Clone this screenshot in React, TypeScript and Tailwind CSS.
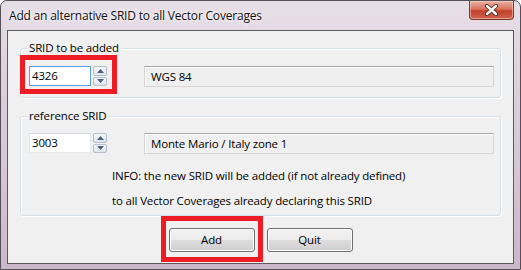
import React from "react";

const T = "text-[11.5px] tracking-[-0.15px]";

function Spin() {
  return (
    <div className="ml-[2px] flex h-[20px] w-[14px] flex-col gap-[1px]">
      {[0, 1].map((i) => (
        <div
          key={i}
          className="flex flex-1 items-center justify-center rounded-[2px] border border-[#b5bfcc] bg-gradient-to-b from-[#f6f7f9] to-[#dfe3e8]"
        >
          <svg width="7" height="4" viewBox="0 0 7 4">
            {i === 0 ? (
              <path d="M0 4 L3.5 0 L7 4 Z" fill="#4d5f80" />
            ) : (
              <path d="M0 0 L3.5 4 L7 0 Z" fill="#4d5f80" />
            )}
          </svg>
        </div>
      ))}
    </div>
  );
}

function Row({ value, name, focused }: { value: string; name: string; focused?: boolean }) {
  return (
    <div className="flex items-start">
      <div
        className={
          "flex h-[20px] w-[62px] items-center bg-white pl-[2px] text-black " +
          T +
          " " +
          (focused
            ? "border border-[#5b9ee0]"
            : "border border-[#e3e9ef] border-t-[#cfd5dc]")
        }
      >
        {value}
      </div>
      <Spin />
      <div
        className={
          "ml-[37px] flex h-[21px] w-[350px] items-center border border-[#d6d6d6] border-t-[#a7a7a7] bg-[#efefef] pl-[6px] text-black shadow-[inset_1px_1px_0_#ffffff] " +
          T
        }
      >
        {name}
      </div>
    </div>
  );
}

function Group({ label, children, h }: { label: string; children: React.ReactNode; h: string }) {
  return (
    <div className={"relative mx-[12px] rounded-[3px] border border-[#d5dfe5] shadow-[inset_1px_1px_0_#ffffff,1px_1px_0_#ffffff] " + h}>
      <div className={"absolute left-[6px] top-[-9px] bg-[#f0f0f0] px-[2px] leading-[16px] text-black " + T}>
        {label}
      </div>
      {children}
    </div>
  );
}

function Button({ label }: { label: string }) {
  return (
    <div
      className={
        "flex h-[24px] w-[86px] items-center justify-center rounded-[3px] border border-[#707070] bg-[linear-gradient(#f2f2f2_0%,#ebebeb_50%,#dddddd_51%,#cfcfcf_100%)] text-black shadow-[inset_0_0_0_1px_#fbfbfb] " +
        T
      }
    >
      {label}
    </div>
  );
}

export default function App() {
  return (
    <div
      className="flex h-[270px] w-[521px] flex-col overflow-hidden rounded-t-[7px] border border-[#565056] bg-[linear-gradient(180deg,#e7dfe7_0%,#ddd0dd_30%,#d3c3d3_70%,#cbb7cb_100%)]"
      style={{ fontFamily: '"Open Sans", "Noto Sans", sans-serif' }}
    >
      <div className="flex h-[29px] items-start justify-between">
        <div className="pl-[8px] pt-[7px] text-[12px] leading-[16px] tracking-[-0.2px] text-[#101010] [text-shadow:0_0_6px_#ffffff,0_0_3px_#ffffff]">
          Add an alternative SRID to all Vector Coverages
        </div>
        <div className="mr-[6px] flex h-[19px] w-[45px] items-center justify-center rounded-b-[4px] border border-t-0 border-[#7a3a30] bg-[linear-gradient(180deg,#eab3a6_0%,#d9705a_45%,#c3412a_55%,#d0634b_100%)] shadow-[inset_0_0_0_1px_rgba(255,220,210,0.5)]">
          <svg width="15" height="12" viewBox="0 0 15 12">
            <path d="M3 2 L12 10 M12 2 L3 10" stroke="#4a2a26" strokeWidth="4.2" strokeLinecap="round" />
            <path d="M3 2 L12 10 M12 2 L3 10" stroke="#ffffff" strokeWidth="2.4" strokeLinecap="round" />
          </svg>
        </div>
      </div>
      <div className="relative mx-[6px] mb-[5px] flex-1 border border-[#5c5a5c] bg-[#f0f0f0]">
        <div className="mt-[17px]">
          <Group label="SRID to be added" h="h-[50px]">
            <div className="pl-[8px] pt-[17px]">
              <Row value="4326" name="WGS 84" focused />
            </div>
          </Group>
        </div>
        <div className="mt-[18px]">
          <Group label="reference SRID" h="h-[100px]">
            <div className="pl-[8px] pt-[16px]">
              <Row value="3003" name="Monte Mario / Italy zone 1" />
            </div>
            <div className={"pl-[91px] pt-[9px] leading-[25px] text-black " + T}>
              <div>INFO: the new SRID will be added (if not already defined)</div>
              <div>to all Vector Coverages already declaring this SRID</div>
            </div>
          </Group>
        </div>
        <div className="mt-[12px] flex justify-center gap-[12px]">
          <Button label="Add" />
          <Button label="Quit" />
        </div>
        <div className="pointer-events-none absolute left-[12px] top-[24px] h-[39px] w-[97px] border-[5px] border-[#ed1c24]" />
        <div className="pointer-events-none absolute left-[153px] top-[185px] h-[46px] w-[102px] border-[5px] border-[#ed1c24]" />
      </div>
    </div>
  );
}
